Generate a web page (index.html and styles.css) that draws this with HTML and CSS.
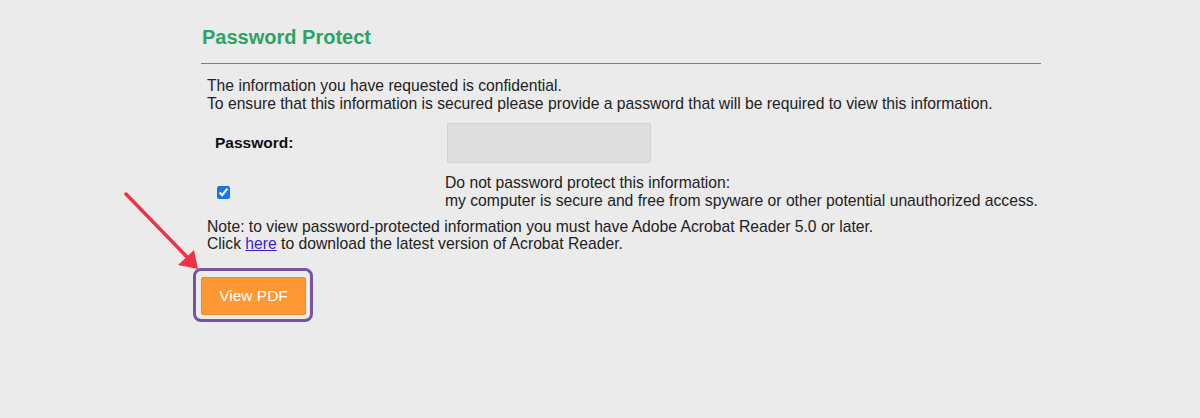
FILE: index.html
```html
<!DOCTYPE html>
<html>
<head>
<meta charset="utf-8">
<link rel="stylesheet" href="styles.css">
</head>
<body>
<div class="page">
  <h1 class="title">Password Protect</h1>
  <hr class="rule">
  <p class="intro">The information you have requested is confidential.<br>To ensure that this information is secured please provide a password that will be required to view this information.</p>
  <div class="form">
    <div class="row pw-row">
      <label class="pw-label" for="pw">Password:</label>
      <input class="pw-input" id="pw" type="password">
    </div>
    <div class="row cb-row">
      <div class="cb-cell"><input class="cb" type="checkbox" checked></div>
      <div class="cb-text">Do not password protect this information:<br>my computer is secure and free from spyware or other potential unauthorized access.</div>
    </div>
  </div>
  <p class="note">Note: to view password-protected information you must have Adobe Acrobat Reader 5.0 or later.<br>Click <a class="link" href="#">here</a> to download the latest version of Acrobat Reader.</p>
  <div class="btn-wrap">
    <div class="highlight"><button class="btn">View PDF</button></div>
    <svg class="arrow" width="100" height="100" viewBox="0 0 100 100">
      <line x1="13" y1="6" x2="76" y2="71" stroke="#ee3347" stroke-width="3.5" stroke-linecap="round"/>
      <polygon points="85,81 65,77 81,62" fill="#ee3347"/>
    </svg>
  </div>
</div>
</body>
</html>
```
FILE: styles.css
```css
html, body {
  margin: 0;
  padding: 0;
  background: #ebebeb;
}
body {
  font-family: "Liberation Sans", Arial, sans-serif;
  color: #222;
  width: 1200px;
  height: 418px;
  overflow: hidden;
}
.page {
  width: 840px;
  margin-left: 201px;
  padding-top: 26px;
}
.title {
  margin: 0;
  font-size: 20px;
  font-weight: bold;
  color: #2ca363;
  line-height: 22px;
  padding-left: 1px;
}
.rule {
  margin: 15px 0 0 0;
  border: 0;
  height: 1px;
  background: #3aa374;
}
.intro {
  margin: 13px 0 0 6px;
  font-size: 15.7px;
  line-height: 18px;
  color: #222;
}
.form {
  margin-top: 10px;
}
.row {
  display: flex;
  align-items: center;
}
.pw-row {
  height: 40px;
}
.pw-label {
  width: 232px;
  padding-left: 14px;
  font-weight: bold;
  font-size: 15.5px;
  color: #111;
}
.pw-input {
  width: 204px;
  height: 40px;
  box-sizing: border-box;
  background: #dedede;
  border: 1px solid #d2d2d2;
  border-radius: 2px;
  margin: 0;
}
.cb-row {
  margin-top: 11px;
}
.cb-cell {
  width: 228px;
  padding-left: 16px;
}
.cb {
  width: 13px;
  height: 13px;
  margin: 0;
  accent-color: #1a73e8;
  display: block;
}
.cb-text {
  font-size: 15.7px;
  line-height: 18px;
  color: #222;
}
.note {
  margin: 8px 0 0 6px;
  font-size: 15.7px;
  line-height: 17px;
  color: #222;
}
.link {
  color: #3a1fcf;
  text-decoration: underline;
}
.btn-wrap {
  position: relative;
  margin-top: 16px;
  margin-left: -8px;
}
.highlight {
  display: inline-block;
  border: 3px solid #7653a3;
  border-radius: 8px;
  padding: 6px 4px 4px 5px;
}
.btn {
  background: #ff9733;
  color: #fff;
  border: 1px solid #f08a28;
  border-radius: 2px;
  width: 105px;
  height: 38px;
  font-family: "Liberation Sans", Arial, sans-serif;
  font-size: 15.5px;
  display: block;
}
.arrow {
  position: absolute;
  left: -80px;
  top: -80px;
}
```
